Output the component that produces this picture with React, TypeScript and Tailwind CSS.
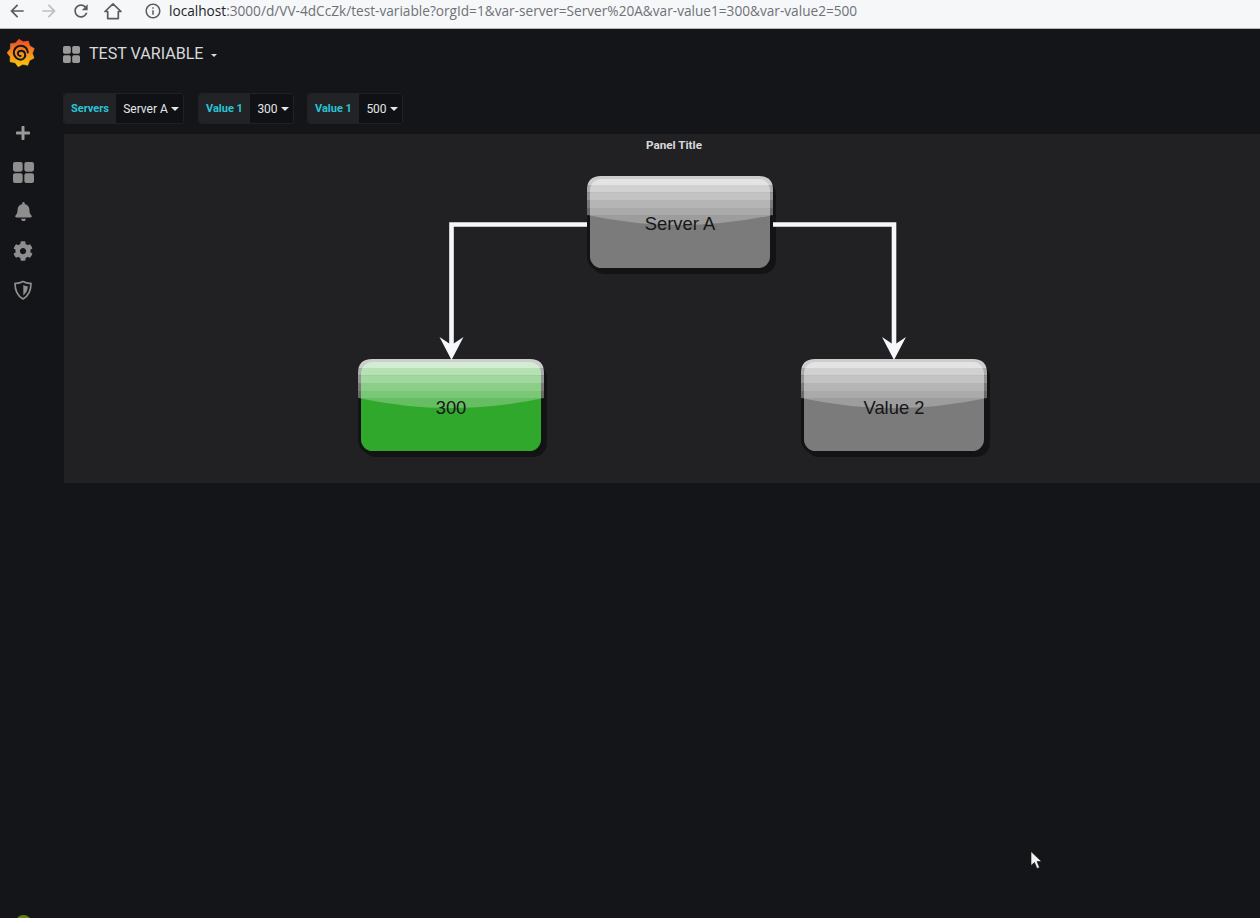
import { FaBell, FaCog, FaPlus } from "react-icons/fa";

function GridIcon({ size, className }: { size: number; className: string }) {
  return (
    <svg width={size} height={size} viewBox="0 0 20 20" className={className} fill="currentColor">
      <rect x="0" y="0" width="9.2" height="9.2" rx="2" />
      <rect x="10.8" y="0" width="9.2" height="9.2" rx="2" />
      <rect x="0" y="10.8" width="9.2" height="9.2" rx="2" />
      <rect x="10.8" y="10.8" width="9.2" height="9.2" rx="2" />
    </svg>
  );
}

function GrafanaLogo() {
  const pts: string[] = [];
  const n = 9;
  for (let i = 0; i < n * 2; i++) {
    const a = (i / (n * 2)) * Math.PI * 2 - Math.PI / 2 - 0.15;
    const r = i % 2 === 0 ? 14 : 11.4;
    pts.push(`${(14 + r * Math.cos(a)).toFixed(2)},${(14 + r * Math.sin(a)).toFixed(2)}`);
  }
  return (
    <svg width="28" height="28" viewBox="0 0 28 28">
      <defs>
        <linearGradient id="gf" x1="0" y1="0" x2="0" y2="1">
          <stop offset="0" stopColor="#ec4a28" />
          <stop offset="0.5" stopColor="#f68b1f" />
          <stop offset="1" stopColor="#fbc80b" />
        </linearGradient>
      </defs>
      <polygon points={pts.join(" ")} fill="url(#gf)" strokeLinejoin="round" stroke="url(#gf)" strokeWidth="0.6" />
      <path
        d="M20.8 13.6 A7 7 0 1 0 14.6 20.6 A4.8 4.8 0 0 0 18 14.5 A3.8 3.8 0 0 0 11 13.6 A2.6 2.6 0 0 0 13.6 17"
        fill="none"
        stroke="#141518"
        strokeWidth="2"
        strokeLinecap="round"
      />
    </svg>
  );
}

function ShieldIcon() {
  return (
    <svg width="20" height="20" viewBox="0 0 20 20">
      <path d="M10 1.5 C7 3.2 4.5 3.6 2 3.4 C2 10 4 15.5 10 19 C16 15.5 18 10 18 3.4 C15.5 3.6 13 3.2 10 1.5 Z" fill="none" stroke="#8e8e8e" strokeWidth="1.7" strokeLinejoin="round" />
      <path d="M10.3 5 C11.8 5.8 13.2 6.2 14.8 6.2 C14.7 10 13.3 13.2 10.3 15.4 Z" fill="#8e8e8e" />
    </svg>
  );
}

function Pill({ label, value, labelW, valueW }: { label: string; value: string; labelW: string; valueW: string }) {
  return (
    <div className="flex h-[31px] rounded-[3px] border border-[#1f2125] text-[12px] leading-none">
      <div className={`flex items-center justify-center bg-[#212326] font-bold text-[#2ac3d6] text-[11px] rounded-l-[3px] ${labelW}`}>
        {label}
      </div>
      <div className={`flex items-center justify-center gap-[3px] pl-[3px] bg-[#101114] text-[#e3e5e8] ${valueW}`}>
        <span>{value}</span>
        <span className="border-x-[4px] border-t-[4px] border-x-transparent border-t-[#e3e5e8]" />
      </div>
    </div>
  );
}

const BANDS = [
  { y: 0, h: 9, o: 0.79 },
  { y: 9, h: 7.5, o: 0.65 },
  { y: 16.5, h: 7.5, o: 0.55 },
  { y: 24, h: 8, o: 0.44 },
  { y: 32, h: 7, o: 0.36 },
  { y: 39, h: 12, o: 0.26 },
];

function FlowNode({ id, left, top, fill, label, textTop }: { id: string; left: string; top: string; fill: string; label: string; textTop: string }) {
  return (
    <div className={`absolute w-[192px] h-[100px] ${left} ${top}`}>
      <svg width="192" height="100" viewBox="0 0 192 100" className="absolute left-0 top-0">
        <defs>
          <clipPath id={id}>
            <path d="M0 39 V14 Q0 0 14 0 H172 Q186 0 186 14 V39 Q93 59 0 39 Z" />
          </clipPath>
        </defs>
        <rect x="4" y="5" width="185" height="93" rx="14" fill="#131315" />
        <rect x="1.5" y="1.5" width="183" height="92" rx="13" fill={fill} stroke="#131315" strokeWidth="3" />
        <g clipPath={`url(#${id})`}>
          {BANDS.map((b) => (
            <rect key={b.y} x="0" y={b.y} width="186" height={b.h} fill="#ffffff" fillOpacity={b.o} />
          ))}
        </g>
      </svg>
      <div className={`absolute left-0 w-[186px] h-[94px] flex items-center justify-center text-[18.4px] text-[#161616] font-['Liberation_Sans',Arial,sans-serif] ${textTop}`}>
        {label}
      </div>
    </div>
  );
}

export default function App() {
  return (
    <div className="relative w-[1260px] h-[918px] overflow-hidden flex flex-col bg-[#141518] font-['Roboto',sans-serif]">
      <div className="h-[29px] shrink-0 flex items-center bg-[#f6f7f9] border-b border-[#b4b6b8] pb-[6px] pt-[0px]">
        <svg width="20" height="20" viewBox="0 0 24 24" className="ml-[7px]" fill="#5a5c5f">
          <path d="M20 11H7.83l5.59-5.59L12 4l-8 8 8 8 1.41-1.41L7.83 13H20v-2z" />
        </svg>
        <svg width="20" height="20" viewBox="0 0 24 24" className="ml-[12px]" fill="#bcbec1">
          <path d="M12 4l-1.41 1.41L16.17 11H4v2h12.17l-5.58 5.59L12 20l8-8z" />
        </svg>
        <svg width="20" height="20" viewBox="0 0 24 24" className="ml-[12px]" fill="#5a5c5f">
          <path d="M17.65 6.35C16.2 4.9 14.21 4 12 4c-4.42 0-7.99 3.58-7.99 8s3.57 8 7.99 8c3.73 0 6.84-2.55 7.73-6h-2.08c-.82 2.33-3.04 4-5.65 4-3.31 0-6-2.69-6-6s2.69-6 6-6c1.66 0 3.14.69 4.22 1.78L13 11h7V4l-2.35 2.35z" />
        </svg>
        <svg width="18" height="18" viewBox="0 0 18 18" className="ml-[13px]" fill="none" stroke="#5a5c5f" strokeWidth="1.7">
          <path d="M1 9.5 L9 1.8 L17 9.5 H14.3 V16.6 H3.7 V9.5 Z" strokeLinejoin="round" />
        </svg>
        <svg width="18" height="18" viewBox="0 0 24 24" className="ml-[22px]" fill="#5a5c5f">
          <path d="M11 7h2v2h-2zm0 4h2v6h-2zm1-9C6.48 2 2 6.48 2 12s4.48 10 10 10 10-4.48 10-10S17.52 2 12 2zm0 18c-4.41 0-8-3.59-8-8s3.59-8 8-8 8 3.59 8 8-3.59 8-8 8z" />
        </svg>
        <div className="ml-[7px] text-[13.65px] leading-none whitespace-nowrap font-['Open_Sans',sans-serif] text-[#6f7276]">
          <span className="text-[#222428]">localhost</span>:3000/d/VV-4dCcZk/test-variable?orgId=1&amp;var-server=Server%20A&amp;var-value1=300&amp;var-value2=500
        </div>
      </div>

      <div className="flex flex-1 min-h-0">
        <aside className="w-[46px] shrink-0 flex flex-col items-center">
          <div className="mt-[10px] ml-[-4px]">
            <GrafanaLogo />
          </div>
          <div className="mt-[58px] text-[#9a9a9a]"><FaPlus size={16} /></div>
          <GridIcon size={21} className="mt-[21px] text-[#8e8e8e]" />
          <div className="mt-[19px] text-[#8e8e8e]"><FaBell size={19} /></div>
          <div className="mt-[20px] text-[#8e8e8e]"><FaCog size={20} /></div>
          <div className="mt-[19px]"><ShieldIcon /></div>
          <div className="mt-auto mb-[-14px] w-[17px] h-[17px] rounded-full bg-[#5f8016]" />
        </aside>

        <main className="flex-1 min-w-0 pl-[17px]">
          <div className="h-[50px] flex items-center">
            <GridIcon size={17} className="text-[#9a9a9a]" />
            <span className="ml-[9px] text-[16.1px] text-[#d8d9da] whitespace-nowrap">TEST VARIABLE</span>
            <span className="ml-[7px] mt-[3px] border-x-[3.5px] border-t-[3.5px] border-x-transparent border-t-[#d8d9da]" />
          </div>

          <div className="mt-[14px] flex">
            <Pill label="Servers" value="Server A" labelW="w-[52px]" valueW="w-[67px]" />
            <div className="ml-[14px]"><Pill label="Value 1" value="300" labelW="w-[51px]" valueW="w-[43px]" /></div>
            <div className="ml-[13px]"><Pill label="Value 1" value="500" labelW="w-[51px]" valueW="w-[43px]" /></div>
          </div>

          <section className="relative mt-[10px] ml-[1px] w-[1220px] h-[349px] bg-[#212124]">
            <div className="pt-[4px] text-center text-[11.7px] font-bold leading-[14px] text-[#d8d9da]">Panel Title</div>

            <FlowNode id="n1" left="left-[523px]" top="top-[42px]" fill="#7b7b7b" label="Server A" textTop="top-[1px]" />
            <FlowNode id="n2" left="left-[294px]" top="top-[225px]" fill="#30a82c" label="300" textTop="top-[2px]" />
            <FlowNode id="n3" left="left-[737px]" top="top-[225px]" fill="#7b7b7b" label="Value 2" textTop="top-[2px]" />

            <svg width="1220" height="349" viewBox="0 0 1220 349" className="absolute left-0 top-0">
              <g fill="none" stroke="#f5f7fa" strokeWidth="4.6">
                <path d="M523 90.5 H387.5 V212" />
                <path d="M709 90.5 H830 V212" />
              </g>
              <path d="M387.5 226 L375.5 203 L387.5 211 L399.5 203 Z" fill="#f5f7fa" />
              <path d="M830 226 L818 203 L830 211 L842 203 Z" fill="#f5f7fa" />
            </svg>
          </section>
        </main>
      </div>

      <svg width="13" height="19" viewBox="0 0 13 19" className="absolute left-[1030px] top-[851px]">
        <path d="M1 0.5 V14.5 L4.5 11.5 L7 17.5 L9.5 16.5 L7 10.5 L11.5 10.5 Z" fill="#f2f2f2" stroke="#141518" strokeWidth="0.6" />
      </svg>
    </div>
  );
}
